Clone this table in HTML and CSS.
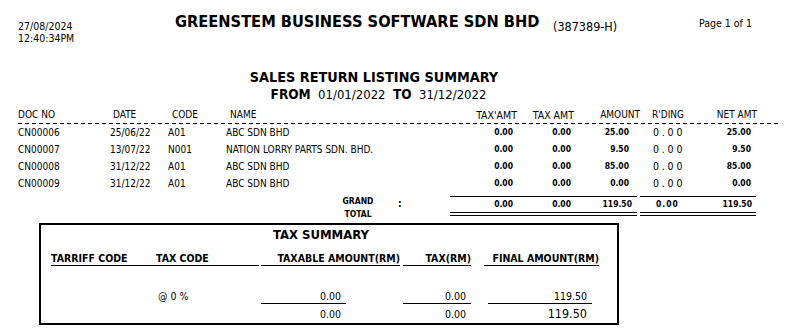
FILE: index.html
```html
<!DOCTYPE html>
<html>
<head>
<meta charset="utf-8">
<link rel="stylesheet" href="styles.css">
</head>
<body>
<div class="page">
  <header class="top">
    <div class="stamp"><div>27/08/2024</div><div>12:40:34PM</div></div>
    <div class="company">
      <span class="cname">GREENSTEM BUSINESS SOFTWARE SDN BHD</span>
      <span class="regno">(387389-H)</span>
    </div>
    <div class="pageno">Page 1 of 1</div>
  </header>

  <div class="rtitle">
    <div class="rname">SALES RETURN LISTING SUMMARY</div>
    <div class="range"><b>FROM</b>&nbsp; 01/01/2022 &nbsp;<b>TO</b>&nbsp; 31/12/2022</div>
  </div>

  <div class="list">
    <div class="row head">
      <div class="c-doc">DOC NO</div>
      <div class="c-date">DATE</div>
      <div class="c-code">CODE</div>
      <div class="c-name">NAME</div>
      <div class="c-t1">TAX'AMT</div>
      <div class="c-t2">TAX AMT</div>
      <div class="c-amt">AMOUNT</div>
      <div class="c-rd">R'DING</div>
      <div class="c-net">NET AMT</div>
    </div>
    <div class="dash"></div>
    <div class="row data">
      <div class="c-doc">CN00006</div><div class="c-date">25/06/22</div><div class="c-code">A01</div><div class="c-name">ABC SDN BHD</div>
      <div class="c-t1 num">0.00</div><div class="c-t2 num">0.00</div><div class="c-amt num">25.00</div><div class="c-rd rdv">0.00</div><div class="c-net num">25.00</div>
    </div>
    <div class="row data">
      <div class="c-doc">CN00007</div><div class="c-date">13/07/22</div><div class="c-code">N001</div><div class="c-name">NATION LORRY PARTS SDN. BHD.</div>
      <div class="c-t1 num">0.00</div><div class="c-t2 num">0.00</div><div class="c-amt num">9.50</div><div class="c-rd rdv">0.00</div><div class="c-net num">9.50</div>
    </div>
    <div class="row data">
      <div class="c-doc">CN00008</div><div class="c-date">31/12/22</div><div class="c-code">A01</div><div class="c-name">ABC SDN BHD</div>
      <div class="c-t1 num">0.00</div><div class="c-t2 num">0.00</div><div class="c-amt num">85.00</div><div class="c-rd rdv">0.00</div><div class="c-net num">85.00</div>
    </div>
    <div class="row data">
      <div class="c-doc">CN00009</div><div class="c-date">31/12/22</div><div class="c-code">A01</div><div class="c-name">ABC SDN BHD</div>
      <div class="c-t1 num">0.00</div><div class="c-t2 num">0.00</div><div class="c-amt num">0.00</div><div class="c-rd rdv">0.00</div><div class="c-net num">0.00</div>
    </div>

    <div class="row total">
      <div class="glabel">
        <div class="gtext">GRAND<br>TOTAL</div>
        <div class="colon">:</div>
      </div>
      <div class="gsum ga">
        <div class="c-t1 num">0.00</div><div class="c-t2 num">0.00</div><div class="c-amt num">119.50</div>
      </div>
      <div class="gsum gb">
        <div class="c-rd num rdt">0.00</div><div class="c-net num">119.50</div>
      </div>
    </div>
  </div>

  <section class="taxbox">
    <div class="taxtitle">TAX SUMMARY</div>
    <div class="trow thead">
      <div class="tc-code">TARRIFF CODE</div>
      <div class="tc-tax">TAX CODE</div>
      <div class="tc-able">TAXABLE AMOUNT(RM)</div>
      <div class="tc-tx">TAX(RM)</div>
      <div class="tc-fin">FINAL AMOUNT(RM)</div>
    </div>
    <div class="trow tdata">
      <div class="tc-code"></div>
      <div class="tc-tax">@ 0 %</div>
      <div class="tc-able"><span class="ul u-able">0.00</span></div>
      <div class="tc-tx"><span class="ul u-tx">0.00</span></div>
      <div class="tc-fin"><span class="ul u-fin">119.50</span></div>
    </div>
    <div class="trow tsum">
      <div class="tc-code"></div>
      <div class="tc-tax"></div>
      <div class="tc-able"><span class="tv u-able">0.00</span></div>
      <div class="tc-tx"><span class="tv u-tx">0.00</span></div>
      <div class="tc-fin"><span class="tv u-fin big">119.50</span></div>
    </div>
  </section>
</div>
</body>
</html>
```

FILE: styles.css
```css
html, body {
  margin: 0;
  padding: 0;
  background: #fff;
}
body {
  font-family: "DejaVu Sans Condensed", "DejaVu Sans", sans-serif;
  font-stretch: semi-condensed;
  color: #000;
  width: 794px;
  height: 333px;
  overflow: hidden;
}
.page {
  width: 794px;
}

/* ---------- top header ---------- */
.top {
  display: flex;
  height: 69px;
}
.stamp {
  box-sizing: border-box;
  width: 175px;
  padding: 20px 0 0 18px;
  font-size: 10.5px;
  line-height: 12px;
}
.company {
  width: 524px;
  display: flex;
  align-items: flex-start;
}
.cname {
  font-weight: bold;
  font-size: 16.3px;
  line-height: 20px;
  padding-top: 12px;
  width: 378px;
  white-space: nowrap;
}
.regno {
  font-size: 12.5px;
  line-height: 16px;
  padding-top: 19px;
}
.pageno {
  font-size: 10.5px;
  line-height: 12px;
  padding-top: 17px;
  white-space: nowrap;
}

/* ---------- report title ---------- */
.rtitle {
  width: 748px;
  text-align: center;
}
.rname {
  font-weight: bold;
  font-size: 14.3px;
  line-height: 17px;
}
.range {
  font-size: 13px;
  line-height: 16px;
  padding-left: 9px;
}
.range b {
  font-size: 13.5px;
}

/* ---------- listing ---------- */
.list {
  margin: 4px 0 0 18px;
  width: 762px;
}
.row {
  display: grid;
  grid-template-columns: 90px 58px 58px 226px 67px 57px 66px 60px 57px 23px;
  white-space: nowrap;
}
.head {
  font-size: 10px;
  line-height: 16px;
}
.head .c-date { padding-left: 5px; }
.head .c-code { padding-left: 6px; }
.head .c-name { padding-left: 6px; }
.head .c-t1, .head .c-t2, .head .c-amt, .head .c-net { text-align: right; }
.head .c-t1, .head .c-t2 { font-size: 10.5px; }
.head .c-rd { padding-left: 12px; }

.dash {
  height: 1px;
  background: repeating-linear-gradient(to right, #000 0 4px, transparent 4px 7px);
}

.data {
  font-size: 10px;
  height: 17px;
  line-height: 17px;
}
.data .c-date, .data .c-code, .data .c-name { padding-left: 2px; }
.num {
  text-align: right;
  font-weight: bold;
  font-size: 8.5px;
}
.data .c-t1 { padding-right: 4px; }
.data .c-t2 { padding-right: 3px; }
.data .c-amt { padding-right: 11px; }
.data .c-net { padding-right: 6px; }
.rdv {
  font-size: 10.5px;
  letter-spacing: 2.8px;
  padding-left: 13px;
}

/* grand total */
.total {
  margin-top: 3px;
}
.glabel {
  grid-column: 1 / 5;
  display: flex;
  padding-left: 322px;
}
.gtext {
  width: 36px;
  text-align: center;
  font-weight: bold;
  font-size: 8.5px;
  line-height: 13px;
}
.colon {
  margin-left: 22px;
  font-weight: bold;
  font-size: 10px;
  line-height: 12px;
  padding-top: 3px;
}
.gsum {
  display: grid;
  margin-top: 1px;
  align-self: start;
  border-top: 1px solid #000;
  border-bottom: 4px double #000;
  line-height: 15px;
}
.ga {
  grid-column: 5 / 8;
  grid-template-columns: 67px 57px 63px;
  margin-right: 3px;
}
.ga .c-t1 { padding-right: 4px; }
.ga .c-t2 { padding-right: 3px; }
.ga .c-amt { padding-right: 5px; }
.gb {
  grid-column: 8 / 10;
  grid-template-columns: 60px 56px;
  margin-right: 1px;
}
.rdt {
  text-align: left;
  padding-left: 16px;
  letter-spacing: 1px;
}
.gb .c-net { padding-right: 4px; }

/* ---------- tax summary box ---------- */
.taxbox {
  box-sizing: border-box;
  margin: 2px 0 0 39px;
  width: 580px;
  height: 102px;
  border: 2px solid #000;
  padding-left: 10px;
}
.taxtitle {
  font-weight: bold;
  font-size: 13px;
  line-height: 16px;
  padding-top: 2px;
  text-align: center;
  padding-right: 26px;
}
.trow {
  display: grid;
  grid-template-columns: 104px 106px 142px 81px 115px;
  white-space: nowrap;
}
.thead {
  padding-top: 8px;
  font-weight: bold;
  font-size: 10.5px;
  line-height: 14px;
}
.thead > div {
  border-bottom: 1px solid #000;
}
.thead .tc-tax { padding-left: 1px; margin-right: 2px; }
.thead .tc-able { text-align: right; margin-right: 3px; }
.thead .tc-tx { text-align: right; margin-right: 13px; }
.thead .tc-fin { text-align: right; }

.tdata, .tsum {
  font-size: 10.5px;
  line-height: 14px;
}
.tdata { margin-top: 23px; }
.tsum { margin-top: 3px; }
.tdata .tc-tax { padding-left: 3px; }
.ul, .tv {
  display: block;
  box-sizing: border-box;
  text-align: right;
  padding-right: 5px;
}
.ul { border-bottom: 1px solid #000; }
.u-able { width: 85px; }
.u-tx { width: 68px; }
.u-fin { width: 104px; margin-left: 4px; }
.big { font-size: 12.5px; }
```
